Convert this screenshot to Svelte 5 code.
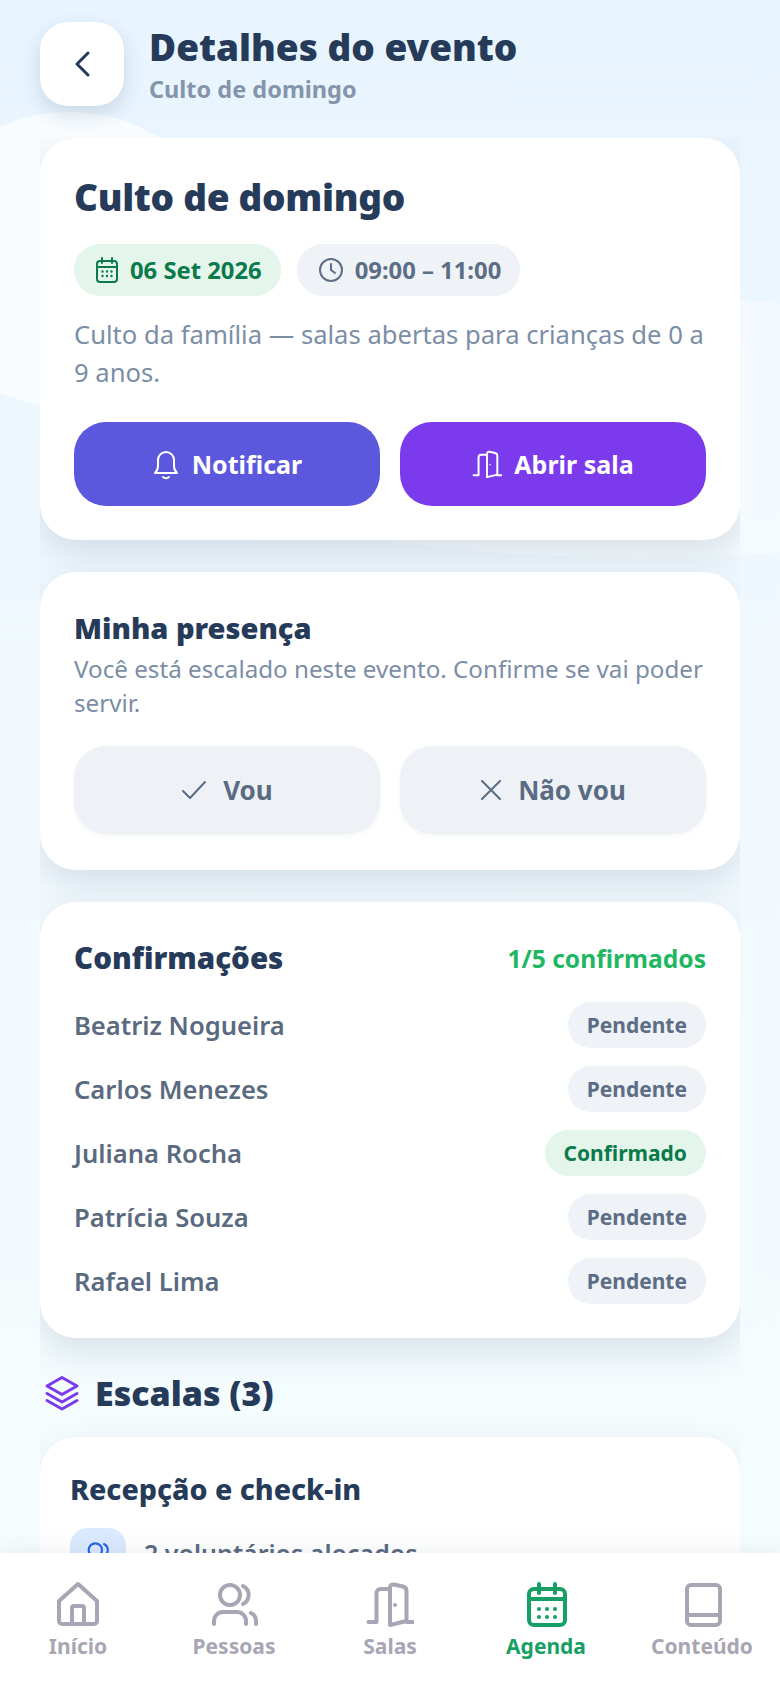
<script>
  const people = [
    { name: "Beatriz Nogueira", ok: false },
    { name: "Carlos Menezes", ok: false },
    { name: "Juliana Rocha", ok: true },
    { name: "Patrícia Souza", ok: false },
    { name: "Rafael Lima", ok: false },
  ];
</script>

<div class="app">
  <div class="blob left"></div>
  <div class="blob right"></div>

  <header class="top">
    <button class="back" aria-label="Voltar">
      <svg width="18" height="28" viewBox="0 0 18 28"><path d="M15 3 4 14l11 11" /></svg>
    </button>
    <div>
      <h1>Detalhes do evento</h1>
      <p>Culto de domingo</p>
    </div>
  </header>

  <main class="scroll">
    <section class="card">
      <h2 class="big">Culto de domingo</h2>
      <div class="pills">
        <span class="pill green">
          <svg width="24" height="26" viewBox="0 0 24 26" class="ic">
            <rect x="2" y="4" width="20" height="21" rx="3" /><path d="M7 1v5M17 1v5M2 10h20" />
            <path class="dots" d="M7.5 14.5h.01M12 14.5h.01M16.500 14.500h.01M7.5 19h.01M12 19h.01M16.500 19h.01" />
          </svg>
          06 Set 2026
        </span>
        <span class="pill grey">
          <svg width="26" height="26" viewBox="0 0 26 26" class="ic"><circle cx="13" cy="13" r="11" /><path d="M13 7v6l4 3" /></svg>
          09:00 – 11:00
        </span>
      </div>
      <p class="desc">Culto da família — salas abertas para crianças de 0 a 9 anos.</p>
      <div class="two">
        <button class="btn indigo">
          <svg width="28" height="32" viewBox="0 0 28 32" class="ic">
            <path d="M3 25c2-2 3-4 3-7v-6a8 8 0 0 1 16 0v6c0 3 1 5 3 7z" /><path d="M11 29c1.500 1.500 4.500 1.500 6 0" />
          </svg>
          Notificar
        </button>
        <button class="btn violet">
          <svg width="30" height="30" viewBox="0 0 48 48" class="ic thick">
            <path d="M2.500 42H10.500V13a4 4 0 0 1 4-4H24M24 8q0-4 4-3.500l9 2q3.500 1 3.500 4.500v30.500M40.500 42H47M24 8v37l16.500-4" /><path class="dots" d="M29 25h.01" />
          </svg>
          Abrir sala
        </button>
      </div>
    </section>

    <section class="card presence">
      <h2 class="mid">Minha presença</h2>
      <p class="desc tight">Você está escalado neste evento. Confirme se vai poder servir.</p>
      <div class="two answer">
        <button class="btn soft">
          <svg width="26" height="20" viewBox="0 0 26 20" class="ic"><path d="m2 11 7 7L24 2" /></svg>
          Vou
        </button>
        <button class="btn soft">
          <svg width="22" height="20" viewBox="0 0 22 20" class="ic"><path d="M2 1l18 18M20 1 2 19" /></svg>
          Não vou
        </button>
      </div>
    </section>

    <section class="card">
      <div class="conf-head">
        <h2 class="mid conf">Confirmações</h2>
        <span class="count">1/5 confirmados</span>
      </div>
      <ul class="list">
        {#each people as p}
          <li>
            <span class="name">{p.name}</span>
            <span class="status" class:ok={p.ok}>{p.ok ? "Confirmado" : "Pendente"}</span>
          </li>
        {/each}
      </ul>
    </section>

    <div class="section-title">
      <svg width="36" height="36" viewBox="0 0 36 36">
        <path d="M18 2.500 33 11 18 19.500 3 11z" /><path d="m3 18.500 15 8.500 15-8.500" /><path d="m3 25.500 15 8.500 15-8.500" />
      </svg>
      <h2>Escalas (3)</h2>
    </div>

    <section class="card scale">
      <h3>Recepção e check-in</h3>
      <div class="scale-row">
        <span class="scale-ic">
          <svg width="32" height="32" viewBox="0 0 48 48" class="ic thick">
            <circle cx="20" cy="15" r="10" /><path d="M33 6a10 10 0 0 1 0 18" /><path d="M4 44v-3a9 9 0 0 1 9-9h14a9 9 0 0 1 9 9v3" />
          </svg>
        </span>
        <span class="scale-text">2 voluntários alocados</span>
        <svg class="chev ic" width="22" height="14" viewBox="0 0 22 14"><path d="m3 5 8 8 8-8" /></svg>
      </div>
    </section>
  </main>

  <nav class="tabs">
    <a href="#inicio">
      <svg width="48" height="48" viewBox="0 0 48 48">
        <path d="M5 21 24 4l19 17v20a3 3 0 0 1-3 3H8a3 3 0 0 1-3-3z" /><path d="M18 44V28a2 2 0 0 1 2-2h8a2 2 0 0 1 2 2v16" />
      </svg>
      Início
    </a>
    <a href="#pessoas">
      <svg width="48" height="48" viewBox="0 0 48 48">
        <circle cx="20" cy="15" r="10" /><path d="M33 6a10 10 0 0 1 0 18" /><path d="M4 44v-3a9 9 0 0 1 9-9h14a9 9 0 0 1 9 9v3" /><path d="M41 33a9 9 0 0 1 5 8v3" />
      </svg>
      Pessoas
    </a>
    <a href="#salas">
      <svg width="48" height="48" viewBox="0 0 48 48">
        <path d="M2.500 42H10.500V13a4 4 0 0 1 4-4H24M24 8q0-4 4-3.500l9 2q3.500 1 3.500 4.500v30.500M40.500 42H47M24 8v37l16.500-4" /><path d="M29 25h.01" />
      </svg>
      Salas
    </a>
    <a href="#agenda" class="active">
      <svg width="48" height="48" viewBox="0 0 48 48">
        <rect x="7" y="9" width="36" height="36" rx="5" /><path d="M17 4v9M33 4v9M7 19h36" />
        <path d="M17 29h.01M25 29h.01M33 29h.01M17 37h.01M25 37h.01M33 37h.01" />
      </svg>
      Agenda
    </a>
    <a href="#conteudo">
      <svg width="48" height="48" viewBox="0 0 48 48">
        <rect x="9" y="5" width="33" height="40" rx="4" /><path d="M9 35h33" />
      </svg>
      Conteúdo
    </a>
  </nav>
</div>

<style>
  :global(body) {
    margin: 0;
  }
  .app {
    height: 1688px;
    display: flex;
    flex-direction: column;
    position: relative;
    overflow: hidden;
    background: linear-gradient(180deg, #e8f4fe 0%, #f1f9fe 45%, #f6fdfe 100%);
    font-family: "Noto Sans", "Open Sans", sans-serif;
  }
  .blob {
    position: absolute;
    border-radius: 50%;
    background: rgba(255, 255, 255, 0.65);
  }
  .blob.left {
    left: -90px;
    top: 112px;
    width: 320px;
    height: 296px;
  }
  .blob.right {
    left: 140px;
    top: 298px;
    width: 1000px;
    height: 260px;
    background: rgba(255, 255, 255, 0.4);
  }
  h1, h2, h3, p, ul {
    margin: 0;
    padding: 0;
  }
  button {
    font-family: inherit;
    border: 0;
    cursor: pointer;
  }
  .top {
    display: flex;
    gap: 25px;
    padding: 22px 40px 0;
    height: 116px;
    position: relative;
  }
  .back {
    width: 84px;
    height: 84px;
    border-radius: 28px;
    background: #fff;
    box-shadow: 0 8px 20px rgba(40, 70, 100, 0.16);
    display: flex;
    align-items: center;
    justify-content: center;
  }
  .back svg path {
    fill: none;
    stroke: #24395a;
    stroke-width: 3;
    stroke-linecap: round;
    stroke-linejoin: round;
  }
  h1 {
    font-size: 37px;
    line-height: 50px;
    font-weight: 900;
    color: #263b5a;
  }
  .top p {
    font-size: 23.5px;
    line-height: 34px;
    font-weight: 700;
    color: #8495ab;
  }
  .scroll {
    flex: 1;
    min-height: 0;
    margin: 0 40px;
    overflow: hidden;
    display: flex;
    flex-direction: column;
    gap: 32px;
    position: relative;
  }
  .card {
    background: #fff;
    border-radius: 36px;
    padding: 30px 34px 34px;
    box-shadow: 0 14px 34px rgba(40, 70, 100, 0.14);
    flex: none;
  }
  .big {
    font-size: 37px;
    line-height: 54px;
    margin-top: 2px;
    letter-spacing: -0.3px;
    font-weight: 900;
    color: #263b5a;
  }
  .mid {
    font-size: 29px;
    line-height: 40px;
    font-weight: 900;
    color: #263b5a;
  }
  .mid.conf {
    font-size: 29.5px;
  }
  .pills {
    display: flex;
    gap: 16px;
    margin-top: 20px;
  }
  .pill {
    height: 52px;
    padding: 0 19px 0 21px;
    border-radius: 26px;
    display: flex;
    align-items: center;
    gap: 11px;
    font-size: 23.8px;
    font-weight: 700;
  }
  .pill.green {
    background: #e4f5ec;
    color: #0b7a4b;
  }
  .pill.grey {
    background: #eff2f6;
    color: #5c6e85;
  }
  .ic {
    fill: none;
    stroke: currentColor;
    stroke-width: 2;
    stroke-linecap: round;
    stroke-linejoin: round;
    flex: none;
  }
  .ic.thick {
    stroke-width: 3.200;
  }
  .ic .dots {
    stroke-width: 2.400;
  }
  .desc {
    font-size: 25.6px;
    line-height: 38px;
    color: #7b8ea6;
    margin-top: 20px;
  }
  .desc.tight {
    font-size: 24.2px;
    line-height: 34px;
    margin-top: 4px;
  }
  .two {
    display: grid;
    grid-template-columns: 1fr 1fr;
    gap: 20px;
    margin-top: 30px;
  }
  .btn {
    height: 84px;
    border-radius: 32px;
    display: flex;
    align-items: center;
    justify-content: center;
    gap: 12px;
    font-size: 25px;
    font-weight: 700;
    color: #fff;
  }
  .indigo {
    background: #5b58de;
  }
  .violet {
    background: #7c3aed;
  }
  .presence {
    padding-top: 36px;
    padding-bottom: 36px;
  }
  .answer {
    margin-top: 26px;
  }
  .answer .soft {
    height: 88px;
    gap: 16px;
    font-size: 26px;
    background: #eef2f6;
    color: #5a6c83;
    box-shadow: 0 2px 4px rgba(40, 70, 100, 0.05);
  }
  .conf-head {
    display: flex;
    justify-content: space-between;
    align-items: center;
    margin-top: 6px;
  }
  .count {
    font-size: 24.6px;
    font-weight: 700;
    color: #1fb763;
  }
  .list {
    list-style: none;
    display: flex;
    flex-direction: column;
    gap: 18px;
    margin-top: 24px;
  }
  .list li {
    display: flex;
    justify-content: space-between;
    align-items: center;
    height: 46px;
  }
  .name {
    font-size: 25.6px;
    font-weight: 600;
    color: #5a6b80;
  }
  .status {
    height: 46px;
    padding: 0 19px;
    border-radius: 23px;
    display: flex;
    align-items: center;
    background: #eff2f6;
    color: #5c6e85;
    font-size: 21px;
    font-weight: 700;
  }
  .status.ok {
    background: #e4f5ec;
    color: #0b7a4b;
  }
  .section-title {
    display: flex;
    align-items: center;
    gap: 15px;
    padding-left: 4px;
    margin: -2px 0 -13px;
    height: 50px;
    flex: none;
  }
  .section-title svg {
    fill: none;
    stroke: #7c3aed;
    stroke-width: 3;
    stroke-linecap: round;
    stroke-linejoin: round;
  }
  .section-title h2 {
    font-size: 34px;
    font-weight: 900;
    color: #263b5a;
  }
  .scale {
    padding: 32px 30px;
  }
  .scale h3 {
    font-size: 28.6px;
    line-height: 40px;
    font-weight: 800;
    color: #263b5a;
  }
  .scale-row {
    display: flex;
    align-items: center;
    gap: 18px;
    margin-top: 19px;
  }
  .scale-ic {
    width: 56px;
    height: 56px;
    border-radius: 18px;
    background: #dbeafe;
    color: #2563eb;
    display: flex;
    align-items: center;
    justify-content: center;
  }
  .scale-text {
    font-size: 25px;
    font-weight: 600;
    color: #5a6b80;
    padding-bottom: 6px;
  }
  .chev {
    margin-left: auto;
    color: #5a6b80;
  }
  .tabs {
    height: 135px;
    flex: none;
    background: #fff;
    display: grid;
    grid-template-columns: repeat(5, 156px);
    box-shadow: 0 -4px 20px rgba(40, 70, 100, 0.07);
    position: relative;
  }
  .tabs a {
    display: flex;
    flex-direction: column;
    align-items: center;
    padding-top: 27px;
    gap: 3px;
    font-size: 21px;
    line-height: 30px;
    font-weight: 700;
    color: #a8a6b4;
    text-decoration: none;
  }
  .tabs a.active {
    color: #16a066;
  }
  .tabs svg {
    fill: none;
    stroke: currentColor;
    stroke-width: 4;
    stroke-linecap: round;
    stroke-linejoin: round;
  }
</style>
